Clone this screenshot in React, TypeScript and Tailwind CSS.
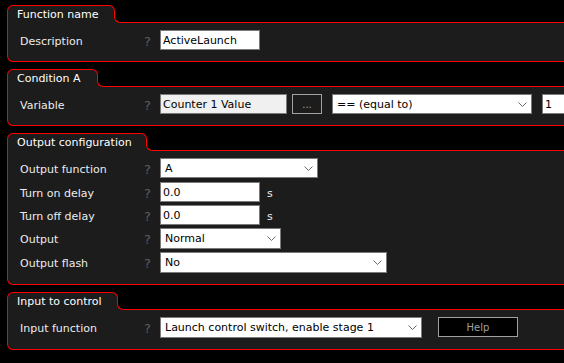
import React from "react";

const RED = "border-[#ff0000]";

function Panel({
  title,
  tabPr,
  bodyPb,
  children,
}: {
  title: string;
  tabPr: string;
  bodyPb: string;
  children: React.ReactNode;
}) {
  return (
    <div className="w-[640px] shrink-0">
      <div className="flex h-[18px]">
        <div
          className={`h-[18px] shrink-0 border-l border-t border-r ${RED} rounded-tl-[6px] rounded-tr-[6px] bg-[#1c1c1c] pl-[9px] ${tabPr} text-[11px] leading-[17px] text-white whitespace-nowrap`}
        >
          {title}
        </div>
        <div className="-ml-px mt-[7px] h-[11px] flex-1 bg-[#1c1c1c]">
          <div className={`h-full bg-black border-l border-b ${RED} rounded-bl-[6px]`} />
        </div>
      </div>
      <div
        className={`border-l border-r border-b ${RED} rounded-bl-[6px] bg-[#1c1c1c] pt-[7px] ${bodyPb} flex flex-col`}
      >
        {children}
      </div>
    </div>
  );
}

function Row({
  label,
  className = "",
  children,
}: {
  label: string;
  className?: string;
  children: React.ReactNode;
}) {
  return (
    <div className={`flex ${className}`}>
      <div className="w-[135px] shrink-0 pl-[12px] text-[11px] leading-[23px] text-[#ececec] whitespace-nowrap">
        {label}
      </div>
      <div className="w-[17px] shrink-0 pl-px text-[13px] leading-[24px] text-[#5e5e5e]">?</div>
      <div className="flex items-start">{children}</div>
    </div>
  );
}

function Chevron() {
  return (
    <svg
      className="absolute right-[4px] top-[7px]"
      width="9"
      height="5"
      viewBox="0 0 9 5"
    >
      <polyline
        points="0.5,0.5 4.5,4.5 8.5,0.5"
        fill="none"
        stroke="#6a6a6a"
        strokeWidth="1"
      />
    </svg>
  );
}

export default function App() {
  const box =
    "h-full shrink-0 border border-[#7a7a7a] text-[11px] leading-[20px] text-black whitespace-nowrap overflow-hidden";
  return (
    <div className="w-[564px] h-[363px] overflow-hidden bg-black pl-[7px] pt-[5px] flex flex-col gap-[7px] font-['DejaVu_Sans',sans-serif]">
      <Panel title="Function name" tabPr="pr-[16px]" bodyPb="pb-[11px]">
        <Row label="Description" className="h-[20px]">
          <div className={`${box} w-[100px] bg-white pl-[2px]`}>ActiveLaunch</div>
        </Row>
      </Panel>

      <Panel title="Condition A" tabPr="pr-[16px]" bodyPb="pb-[11px]">
        <Row label="Variable" className="h-[20px]">
          <div className={`${box} w-[127px] bg-[#f0f0f0] pl-[2px]`}>Counter 1 Value</div>
          <div className="ml-[5px] h-[20px] w-[30px] shrink-0 border border-[#a0a0a0] bg-[#1c1c1c] text-center text-[10px] leading-[19px] text-[#a0a0a0]">
            ...
          </div>
          <div className={`${box} relative ml-[10px] w-[200px] bg-white pl-[4px]`}>
            == (equal to)
            <Chevron />
          </div>
          <div className={`${box} ml-[10px] w-[60px] bg-white pl-[2px]`}>1</div>
        </Row>
      </Panel>

      <Panel title="Output configuration" tabPr="pr-[14px]" bodyPb="pb-[11px]">
        <Row label="Output function" className="h-[20px]">
          <div className={`${box} relative w-[158px] bg-white pl-[4px]`}>
            A
            <Chevron />
          </div>
        </Row>
        <Row label="Turn on delay" className="h-[20px] mt-[4px]">
          <div className={`${box} w-[100px] bg-white pl-[2px]`}>0.0</div>
          <div className="ml-[7px] text-[11px] leading-[23px] text-[#ececec]">s</div>
        </Row>
        <Row label="Turn off delay" className="h-[20px] mt-[3px]">
          <div className={`${box} w-[100px] bg-white pl-[2px]`}>0.0</div>
          <div className="ml-[7px] text-[11px] leading-[23px] text-[#ececec]">s</div>
        </Row>
        <Row label="Output" className="h-[21px] mt-[3px]">
          <div className={`${box} relative w-[121px] bg-white pl-[4px]`}>
            Normal
            <Chevron />
          </div>
        </Row>
        <Row label="Output flash" className="h-[21px] mt-[3px]">
          <div className={`${box} relative w-[227px] bg-white pl-[4px]`}>
            No
            <Chevron />
          </div>
        </Row>
      </Panel>

      <Panel title="Input to control" tabPr="pr-[15px]" bodyPb="pb-[11px]">
        <Row label="Input function" className="h-[21px]">
          <div className={`${box} relative w-[262px] bg-white pl-[4px]`}>
            Launch control switch, enable stage 1
            <Chevron />
          </div>
          <div className="ml-[16px] h-[20px] w-[80px] shrink-0 border border-[#a0a0a0] bg-black text-center text-[10px] leading-[19px] text-[#a0a0a0]">
            Help
          </div>
        </Row>
      </Panel>
    </div>
  );
}
